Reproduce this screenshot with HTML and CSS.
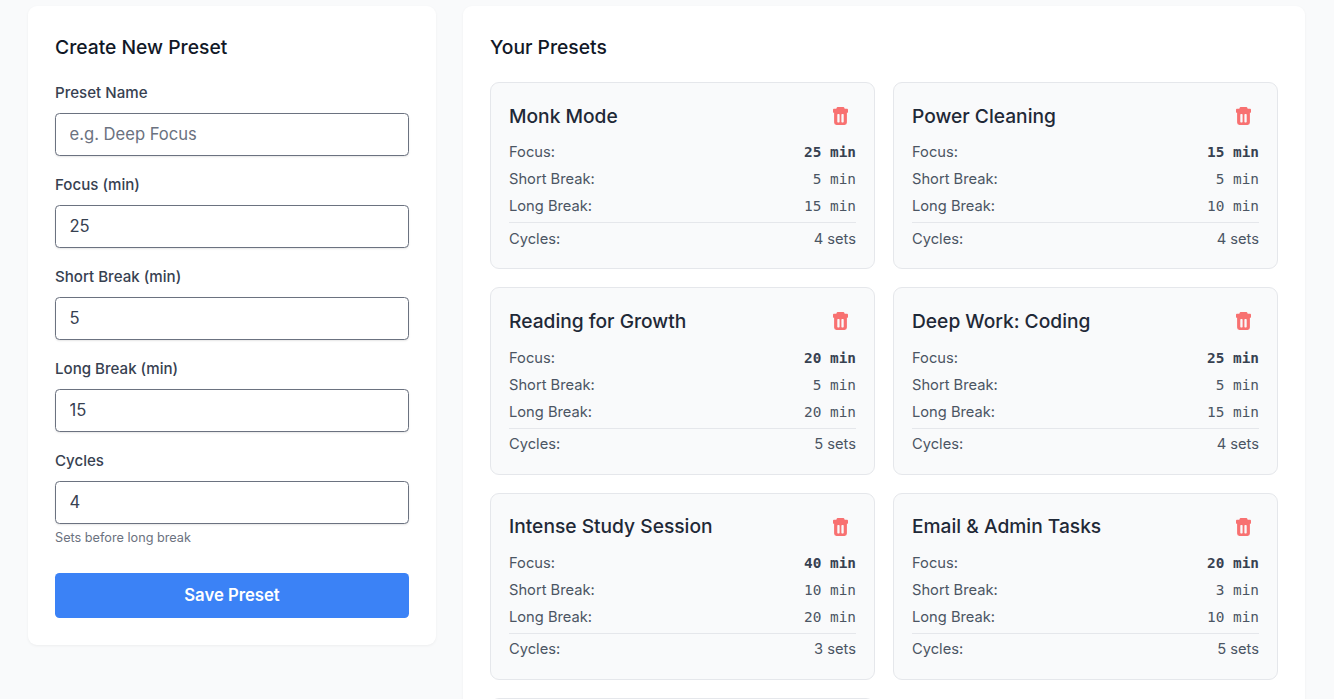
FILE: index.html
```html
<!DOCTYPE html>
<html lang="en">
<head>
<meta charset="utf-8">
<title>Presets</title>
<link rel="stylesheet" href="styles.css">
</head>
<body>
<svg class="sprite" width="0" height="0" aria-hidden="true">
  <symbol id="trash" viewBox="0 0 15 18">
    <path fill-rule="evenodd" d="M4.6 0h5.8a1 1 0 0 1 .9.7l.4 1.1h2.4a.9.9 0 0 1 .9.9v2.2a.9.9 0 0 1-.9.9h-.2v9.8a2.4 2.4 0 0 1-2.4 2.4H3.5a2.4 2.4 0 0 1-2.4-2.4V5.8H.9a.9.9 0 0 1-.9-.9V2.7a.9.9 0 0 1 .9-.9h2.4L3.7.7a1 1 0 0 1 .9-.7zM5 7a.7.7 0 0 0-.7.7v7.1a.7.7 0 0 0 .7.7h.9a.7.7 0 0 0 .7-.7V7.700a.7.7 0 0 0-.7-.7zm4.100 0a.7.7 0 0 0-.7.7v7.1a.7.7 0 0 0 .7.7h.9a.7.7 0 0 0 .7-.7V7.700a.7.7 0 0 0-.7-.7z"/>
  </symbol>
</svg>
<main class="layout">
  <section class="panel form-panel">
    <h2 class="panel-title">Create New Preset</h2>
    <form class="form">
      <div class="field"><label class="label" for="n">Preset Name</label><input class="input" id="n" type="text" placeholder="e.g. Deep Focus"></div>
      <div class="field"><label class="label" for="f">Focus (min)</label><input class="input" id="f" type="text" value="25"></div>
      <div class="field"><label class="label" for="s">Short Break (min)</label><input class="input" id="s" type="text" value="5"></div>
      <div class="field"><label class="label" for="l">Long Break (min)</label><input class="input" id="l" type="text" value="15"></div>
      <div class="field field-last"><label class="label" for="c">Cycles</label><input class="input" id="c" type="text" value="4"><p class="hint">Sets before long break</p></div>
      <button class="save" type="button">Save Preset</button>
    </form>
  </section>
  <section class="panel list-panel">
    <h2 class="panel-title">Your Presets</h2>
    <div class="grid">
      <article class="card"><header class="card-head"><h3 class="card-title">Monk Mode</h3><svg class="trash"><use href="#trash"/></svg></header><div class="row"><span>Focus:</span><b class="mono strong">25 min</b></div><div class="row"><span>Short Break:</span><span class="mono">5 min</span></div><div class="row"><span>Long Break:</span><span class="mono">15 min</span></div><div class="row cycles"><span>Cycles:</span><span>4 sets</span></div></article>
      <article class="card"><header class="card-head"><h3 class="card-title">Power Cleaning</h3><svg class="trash"><use href="#trash"/></svg></header><div class="row"><span>Focus:</span><b class="mono strong">15 min</b></div><div class="row"><span>Short Break:</span><span class="mono">5 min</span></div><div class="row"><span>Long Break:</span><span class="mono">10 min</span></div><div class="row cycles"><span>Cycles:</span><span>4 sets</span></div></article>
      <article class="card"><header class="card-head"><h3 class="card-title">Reading for Growth</h3><svg class="trash"><use href="#trash"/></svg></header><div class="row"><span>Focus:</span><b class="mono strong">20 min</b></div><div class="row"><span>Short Break:</span><span class="mono">5 min</span></div><div class="row"><span>Long Break:</span><span class="mono">20 min</span></div><div class="row cycles"><span>Cycles:</span><span>5 sets</span></div></article>
      <article class="card"><header class="card-head"><h3 class="card-title">Deep Work: Coding</h3><svg class="trash"><use href="#trash"/></svg></header><div class="row"><span>Focus:</span><b class="mono strong">25 min</b></div><div class="row"><span>Short Break:</span><span class="mono">5 min</span></div><div class="row"><span>Long Break:</span><span class="mono">15 min</span></div><div class="row cycles"><span>Cycles:</span><span>4 sets</span></div></article>
      <article class="card"><header class="card-head"><h3 class="card-title">Intense Study Session</h3><svg class="trash"><use href="#trash"/></svg></header><div class="row"><span>Focus:</span><b class="mono strong">40 min</b></div><div class="row"><span>Short Break:</span><span class="mono">10 min</span></div><div class="row"><span>Long Break:</span><span class="mono">20 min</span></div><div class="row cycles"><span>Cycles:</span><span>3 sets</span></div></article>
      <article class="card"><header class="card-head"><h3 class="card-title">Email &amp; Admin Tasks</h3><svg class="trash"><use href="#trash"/></svg></header><div class="row"><span>Focus:</span><b class="mono strong">20 min</b></div><div class="row"><span>Short Break:</span><span class="mono">3 min</span></div><div class="row"><span>Long Break:</span><span class="mono">10 min</span></div><div class="row cycles"><span>Cycles:</span><span>5 sets</span></div></article>
      <article class="card card-empty"></article>
    </div>
  </section>
</main>
</body>
</html>
```
FILE: styles.css
```css
* { box-sizing: border-box; }
html, body { height: 100%; overflow: hidden; }
body {
  margin: 0;
  background: #f9fafb;
  font-family: Inter, "Noto Sans", sans-serif;
  color: #1f2937;
}
.sprite { position: absolute; }
.layout {
  display: grid;
  grid-template-columns: 408px 842px;
  column-gap: 27px;
  align-items: start;
  padding: 6px 0 0 28px;
}
.panel {
  background: #fff;
  border-radius: 9px;
  padding: 27px;
  box-shadow: 0 1px 3px rgba(0, 0, 0, .05);
}
.panel-title {
  margin: 0;
  height: 28px;
  font-size: 19.3px;
  line-height: 29px;
  font-weight: 500;
  color: #111827;
}
.form { margin-top: 22px; }
.field { margin-bottom: 19px; }
.field-last { margin-bottom: 0; }
.label {
  display: block;
  height: 20px;
  margin-bottom: 10px;
  font-size: 15.1px;
  line-height: 20px;
  font-weight: 500;
  color: #374151;
}
.input {
  display: block;
  width: 100%;
  height: 43px;
  padding: 0 13.5px 2px;
  border: 1px solid #6b7280;
  border-radius: 4.5px;
  background: #fff;
  box-shadow: 0 1px 2px rgba(0, 0, 0, .1);
  font: 400 16.6px Inter, sans-serif;
  color: #374151;
  outline: 0;
}
.input::placeholder { color: #6b7280; opacity: 1; }
.hint {
  margin: 5px 0 0;
  font-size: 12.7px;
  line-height: 18px;
  color: #6b7280;
}
.save {
  display: block;
  width: 100%;
  height: 45px;
  margin-top: 26px;
  padding: 0 0 2px;
  border: 0;
  border-radius: 4.5px;
  background: #3b82f6;
  color: #fff;
  font: 600 16.7px Inter, sans-serif;
}
.grid {
  display: grid;
  grid-template-columns: 385px 385px;
  gap: 18px;
  margin-top: 21px;
}
.card {
  padding: 18px;
  background: #f9fafb;
  border: 1px solid #e5e7eb;
  border-radius: 9px;
  font-size: 14.7px;
  line-height: 21.6px;
  color: #4b5563;
}
.card-empty { height: 187px; }
.card-head {
  display: flex;
  justify-content: space-between;
  align-items: center;
  height: 30px;
  margin-bottom: 11.4px;
}
.card-title {
  margin: 0;
  padding-top: 1px;
  font-size: 19.2px;
  font-weight: 500;
  color: #1f2937;
}
.trash {
  width: 15px;
  height: 18px;
  margin-right: 8px;
  fill: #f87171;
}
.row {
  display: flex;
  justify-content: space-between;
  margin-bottom: 5.4px;
}
.mono { font-family: "DejaVu Sans Mono", monospace; font-size: 14.4px; }
.strong { font-weight: 700; color: #374151; }
.cycles {
  margin-top: -1px;
  margin-bottom: 0;
  padding-top: 5.4px;
  border-top: 1px solid #e5e7eb;
}
```
